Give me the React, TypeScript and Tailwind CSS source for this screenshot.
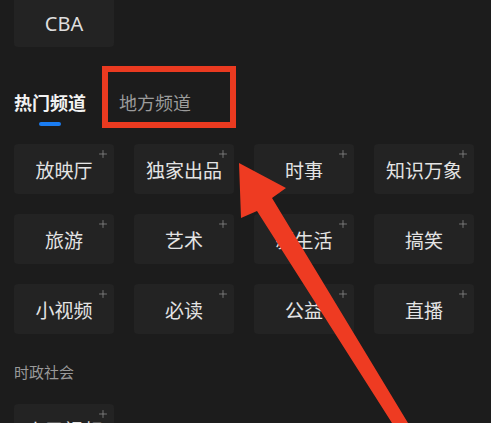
import { Plus } from "lucide-react";

const channels = [
  "放映厅",
  "独家出品",
  "时事",
  "知识万象",
  "旅游",
  "艺术",
  "新生活",
  "搞笑",
  "小视频",
  "必读",
  "公益",
  "直播",
];

const font = { fontFamily: '"Noto Sans CJK SC", "Noto Sans", sans-serif' };

function Tile({ label, plus = true }: { label: string; plus?: boolean }) {
  return (
    <div className="relative flex h-[50px] w-[100px] items-center justify-center rounded-[4px] bg-[#232323] text-[19px] text-[#e4e4e4]">
      <span className="leading-none">{label}</span>
      {plus ? (
        <Plus className="absolute right-[5px] top-[4px] h-[12px] w-[12px] text-[#8f8f8f]" strokeWidth={1.5} />
      ) : null}
    </div>
  );
}

export default function App() {
  return (
    <div className="relative h-[423px] w-[491px] overflow-hidden bg-[#1c1c1c]" style={font}>
      <div className="flex flex-col pl-[14px]">
        <div className="flex h-[47px] w-[100px] items-center justify-center rounded-b-[4px] bg-[#232323] text-[20px] text-[#dedede]" style={{ fontFamily: '"Noto Sans", sans-serif' }}>
          CBA
        </div>

        {/* tabs */}
        <div className="mt-[42px] flex items-start gap-[33px]">
          <div className="flex flex-col items-center">
            <span className="text-[18px] font-bold leading-[26px] text-[#f2f2f2]">热门频道</span>
            <span className="mt-[7px] h-[4px] w-[22px] rounded-full bg-[#1a7df2]" />
          </div>
          <span className="text-[18px] leading-[26px] text-[#9b9b9b]">地方频道</span>
        </div>

        <div className="mt-[18px] grid grid-cols-[repeat(4,100px)] gap-x-[20px] gap-y-[20px]">
          {channels.map((c) => (
            <Tile key={c} label={c} />
          ))}
        </div>

        <div className="mt-[28px] text-[15px] leading-[20px] text-[#9a9a9a]">时政社会</div>

        <div className="mt-[22px]">
          <Tile label="人民视频" />
        </div>
      </div>

      {/* annotation: red box */}
      <div className="absolute left-[102px] top-[66px] h-[62px] w-[134px] border-[6px] border-[#ea3a20]" />

      {/* annotation: red arrow */}
      <svg className="pointer-events-none absolute left-0 top-0" width="491" height="423" viewBox="0 0 491 423">
        <polygon
          points="239,163 286,188 272,198 408,423 392,423 257,211 241,218"
          fill="#ee3b22"
        />
      </svg>
    </div>
  );
}
